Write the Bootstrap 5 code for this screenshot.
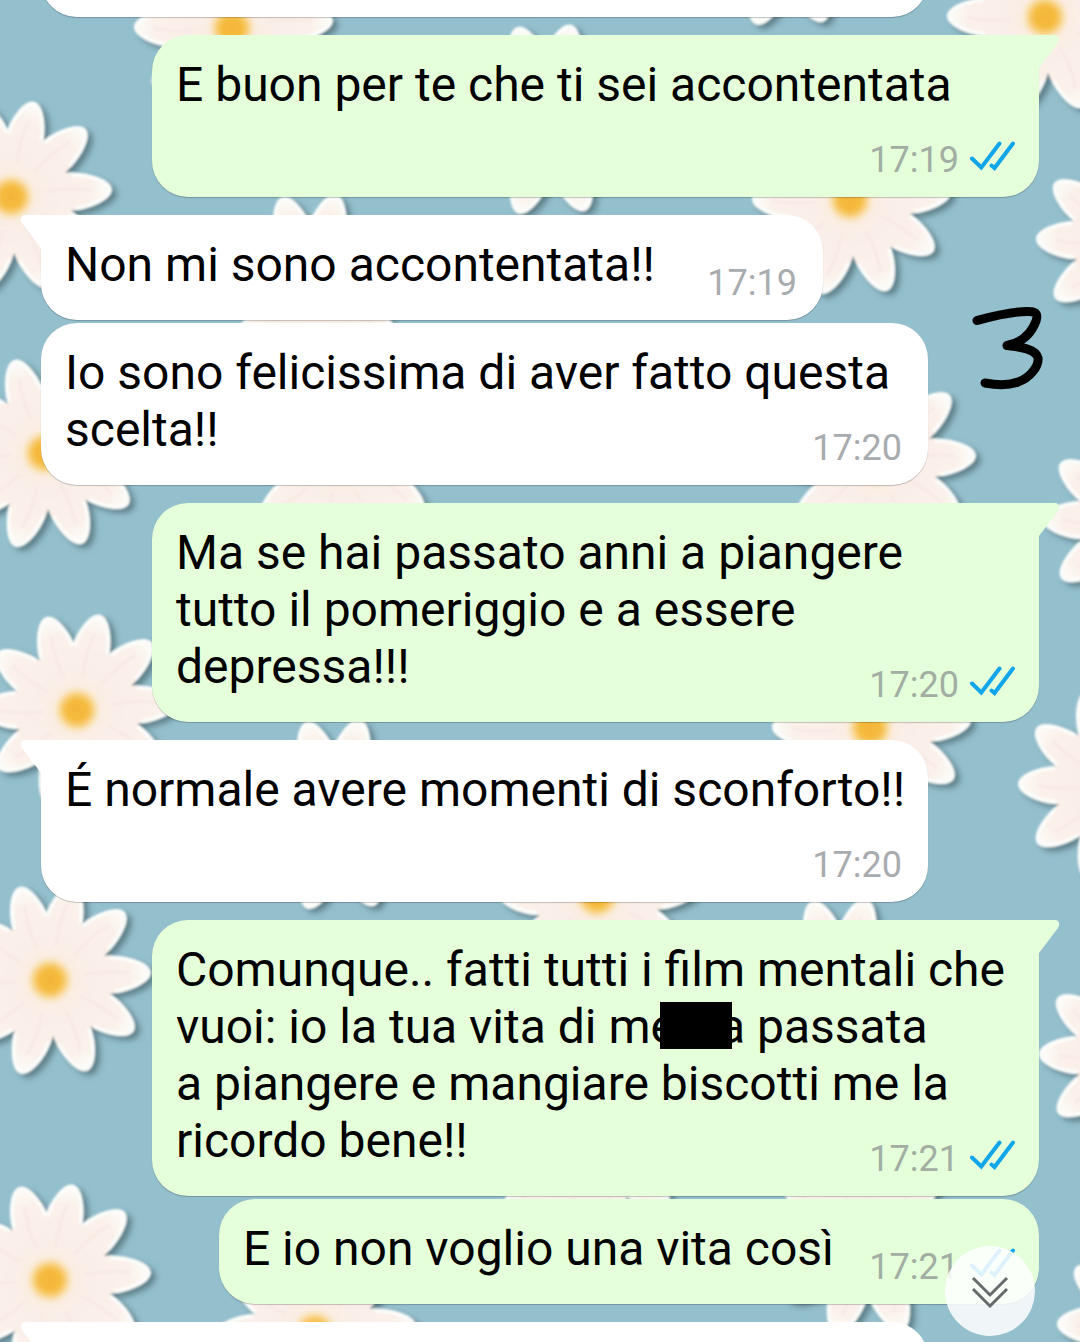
<!DOCTYPE html>
<html lang="it">
<head>
<meta charset="utf-8">
<meta name="viewport" content="width=device-width, initial-scale=1">
<title>Chat</title>
<link href="https://cdn.jsdelivr.net/npm/bootstrap@5.3.0/dist/css/bootstrap.min.css" rel="stylesheet">
<style>
  body { background: #94bfcd; font-family: Roboto, "Noto Sans", sans-serif; color: #000; }
  .chat { padding: 0 41px; }
  .wallpaper { z-index: 0; }
  .thread { z-index: 1; gap: 18px; margin-top: -88px; }
  .run { gap: 3px; }
  .bubble { max-width: calc(100% - 111px); padding: 21px 22px 27px 24px; border-radius: 36px; background: #fff; font-size: 48px; line-height: 57px; box-shadow: 0 1px 1px rgba(0, 0, 0, .22); }
  .bubble-out { padding-right: 24px; background: #e4ffda; }
  .tail-in { border-top-left-radius: 0; }
  .tail-out { border-top-right-radius: 0; }
  .tail { top: 0; width: 22px; height: 34px; }
  .tail-in > .tail { left: -21px; }
  .tail-out > .tail { right: -21px; }
  .room { display: inline-block; width: 146px; height: 1px; }
  .bubble-out .room { width: 181px; }
  .stamp { right: 26px; bottom: 17px; gap: 10px; font-size: 36px; line-height: 40px; color: #a8acaf; }
  .bubble-out .stamp { right: 24px; color: #a2aea3; }
  .censor { padding-left: 43px; }
  .censor::after { content: ""; position: absolute; left: -16px; bottom: 6px; width: 72px; height: 47px; background: #000; }
  .doodle { z-index: 2; top: 305px; right: 36px; width: 72px; height: 88px; }
  .jump { z-index: 2; right: 45px; bottom: 6px; width: 90px; height: 90px; background: rgba(255, 255, 255, .86); }
</style>
</head>
<body>
<svg width="0" height="0" class="position-absolute" aria-hidden="true">
  <defs>
    <radialGradient id="petalFill" gradientUnits="userSpaceOnUse" cx="0" cy="0" r="97">
      <stop offset="0" stop-color="#fbe9cf"/><stop offset=".35" stop-color="#faeee8"/><stop offset=".8" stop-color="#fbf1ea"/><stop offset="1" stop-color="#fdfdfa"/>
    </radialGradient>
    <radialGradient id="heart">
      <stop offset="0" stop-color="#f3b53a"/><stop offset=".4" stop-color="#f5bb3f"/><stop offset=".62" stop-color="#f8cf78"/><stop offset="1" stop-color="#fbeacb" stop-opacity="0"/>
    </radialGradient>
    <filter id="soft" x="-20%" y="-20%" width="140%" height="140%">
      <feGaussianBlur in="SourceAlpha" stdDeviation="3" result="s"/>
      <feOffset in="s" dx="5" dy="4" result="o"/>
      <feFlood flood-color="#4f6f78" flood-opacity=".8"/>
      <feComposite in2="o" operator="in" result="shade"/>
      <feGaussianBlur in="SourceGraphic" stdDeviation="1.2" result="g"/>
      <feMerge><feMergeNode in="shade"/><feMergeNode in="g"/></feMerge>
    </filter>
    <g id="petal">
      <path d="M0 0C-14 -18 -23 -46 -18 -66C-14 -84 -6 -97 1 -98C8 -97 15 -84 18 -68C22 -48 14 -18 0 0Z" fill="url(#petalFill)"/>
      <path d="M-17 -60C-16 -78 -7 -96 1 -96C9 -96 16 -78 17 -62" fill="none" stroke="#fbfdfb" stroke-width="4"/>
      <path d="M-2 -34C-4 -50 -3 -66 0 -78" fill="none" stroke="#f5e4e0" stroke-width="3" opacity=".5"/>
    </g>
    <g id="daisy" filter="url(#soft)">
      <use href="#petal" transform="rotate(-55)"/>
      <use href="#petal" transform="rotate(-90)"/>
      <use href="#petal" transform="rotate(-127)"/>
      <use href="#petal" transform="rotate(-163)"/>
      <use href="#petal" transform="rotate(157)"/>
      <use href="#petal" transform="rotate(121)"/>
      <use href="#petal" transform="rotate(85) scale(1 1.03)"/>
      <use href="#petal" transform="rotate(47) scale(1 1.03)"/>
      <use href="#petal" transform="rotate(13)"/>
      <use href="#petal" transform="rotate(-19)"/>
      <circle r="25" fill="url(#heart)"/>
    </g>
    <g id="ticks" fill="none" stroke="#12a5ea" stroke-width="4" stroke-linecap="round" stroke-linejoin="miter">
      <path d="M3 17.500L12.300 26.500L30.500 2.500M22.500 24.500L25.500 27L44 2.500"/>
    </g>
    <path id="tailRight" d="M0 0H17C21 0 22.500 4 20 8L1 33H0Z"/>
    <path id="tailLeft" d="M22 0H5C1 0 -.5 4 2 8L21 33H22Z"/>
  </defs>
</svg>

<main class="chat position-relative vh-100 overflow-hidden">
  <svg class="wallpaper position-absolute top-0 start-0 w-100 h-100" viewBox="0 0 1080 1342" preserveAspectRatio="xMidYMin slice" aria-hidden="true">
    <use href="#daisy" x="232" y="28"/><use href="#daisy" x="786" y="-69"/><use href="#daisy" x="1045" y="17"/>
    <use href="#daisy" x="548" y="120"/><use href="#daisy" x="11" y="197"/><use href="#daisy" x="850" y="200"/>
    <use href="#daisy" x="313" y="290"/><use href="#daisy" x="1134" y="240"/><use href="#daisy" x="45" y="453"/>
    <use href="#daisy" x="340" y="460"/><use href="#daisy" x="875" y="463"/><use href="#daisy" x="1140" y="520"/>
    <use href="#daisy" x="77" y="710"/><use href="#daisy" x="337" y="815"/><use href="#daisy" x="870" y="728"/>
    <use href="#daisy" x="1116" y="785"/><use href="#daisy" x="50" y="980"/><use href="#daisy" x="597" y="896"/>
    <use href="#daisy" x="843" y="994"/><use href="#daisy" x="1137" y="1055"/><use href="#daisy" x="50" y="1280"/>
    <use href="#daisy" x="315" y="1333"/><use href="#daisy" x="585" y="1150"/><use href="#daisy" x="865" y="1240"/>
    <use href="#daisy" x="1155" y="1325"/>
  </svg>

  <div class="thread position-relative d-flex flex-column">
    <div class="bubble position-relative align-self-start w-100" aria-hidden="true">&nbsp;</div>

    <div class="bubble bubble-out tail-out position-relative align-self-end">
      <svg class="tail position-absolute" viewBox="0 0 22 34" fill="#e4ffda" aria-hidden="true"><use href="#tailRight"/></svg>
      E buon per te che ti sei accontentata<span class="room"></span>
      <div class="stamp position-absolute d-flex align-items-center"><time>17:19</time><svg width="46" height="30" class="mb-2" aria-label="Letto"><use href="#ticks"/></svg></div>
    </div>

    <div class="run d-flex flex-column align-items-start">
      <div class="bubble tail-in position-relative">
        <svg class="tail position-absolute" viewBox="0 0 22 34" fill="#fff" aria-hidden="true"><use href="#tailLeft"/></svg>
        Non mi sono accontentata!!<span class="room"></span>
        <div class="stamp position-absolute"><time>17:19</time></div>
      </div>
      <div class="bubble position-relative">
        Io sono felicissima di aver fatto questa scelta!!<span class="room"></span>
        <div class="stamp position-absolute"><time>17:20</time></div>
      </div>
    </div>

    <div class="bubble bubble-out tail-out position-relative align-self-end">
      <svg class="tail position-absolute" viewBox="0 0 22 34" fill="#e4ffda" aria-hidden="true"><use href="#tailRight"/></svg>
      Ma se hai passato anni a piangere tutto&nbsp;il pomeriggio e a essere depressa!!!<span class="room"></span>
      <div class="stamp position-absolute d-flex align-items-center"><time>17:20</time><svg width="46" height="30" class="mb-2" aria-label="Letto"><use href="#ticks"/></svg></div>
    </div>

    <div class="bubble tail-in position-relative align-self-start">
      <svg class="tail position-absolute" viewBox="0 0 22 34" fill="#fff" aria-hidden="true"><use href="#tailLeft"/></svg>
      É normale avere momenti di sconforto!!<span class="room"></span>
      <div class="stamp position-absolute"><time>17:20</time></div>
    </div>

    <div class="run d-flex flex-column align-items-end">
      <div class="bubble bubble-out tail-out position-relative">
        <svg class="tail position-absolute" viewBox="0 0 22 34" fill="#e4ffda" aria-hidden="true"><use href="#tailRight"/></svg>
        Comunque.. fatti tutti i film mentali che vuoi: io la tua vita di me<span class="censor position-relative"></span>a passata a&nbsp;piangere e mangiare biscotti me la ricordo bene!!<span class="room"></span>
        <div class="stamp position-absolute d-flex align-items-center"><time>17:21</time><svg width="46" height="30" class="mb-2" aria-label="Letto"><use href="#ticks"/></svg></div>
      </div>
      <div class="bubble bubble-out position-relative">
        E io non voglio una vita così<span class="room"></span>
        <div class="stamp position-absolute d-flex align-items-center"><time>17:21</time><svg width="46" height="30" class="mb-2" aria-label="Letto"><use href="#ticks"/></svg></div>
      </div>
    </div>

    <div class="bubble tail-in position-relative align-self-start w-100" aria-hidden="true">
      <svg class="tail position-absolute" viewBox="0 0 22 34" fill="#fff"><use href="#tailLeft"/></svg>&nbsp;
    </div>
  </div>

  <svg class="doodle position-absolute" viewBox="972 305 72 88" role="img" aria-label="3">
    <path d="M977 320.500C990 317 1012 311 1029 311.500C1037 311.500 1038 315 1036 321C1032 332 1024 342 1007 345.500C1022 347 1036 349 1038 358C1039 366 1030 378 1018 382C1009 385.500 996 385 985 383" fill="none" stroke="#000" stroke-width="9" stroke-linecap="round" stroke-linejoin="round"/>
  </svg>

  <button type="button" class="jump btn border-0 rounded-circle position-absolute p-0 d-flex align-items-center justify-content-center" aria-label="Vai in fondo">
    <svg width="40" height="34" viewBox="0 0 40 34" fill="none" stroke="#666b6b" stroke-width="3" aria-hidden="true"><path d="M3 4L20 21L37 4M3 15L20 32L37 15"/></svg>
  </button>
</main>
<script src="https://cdn.jsdelivr.net/npm/bootstrap@5.3.0/dist/js/bootstrap.bundle.min.js"></script>
</body>
</html>
